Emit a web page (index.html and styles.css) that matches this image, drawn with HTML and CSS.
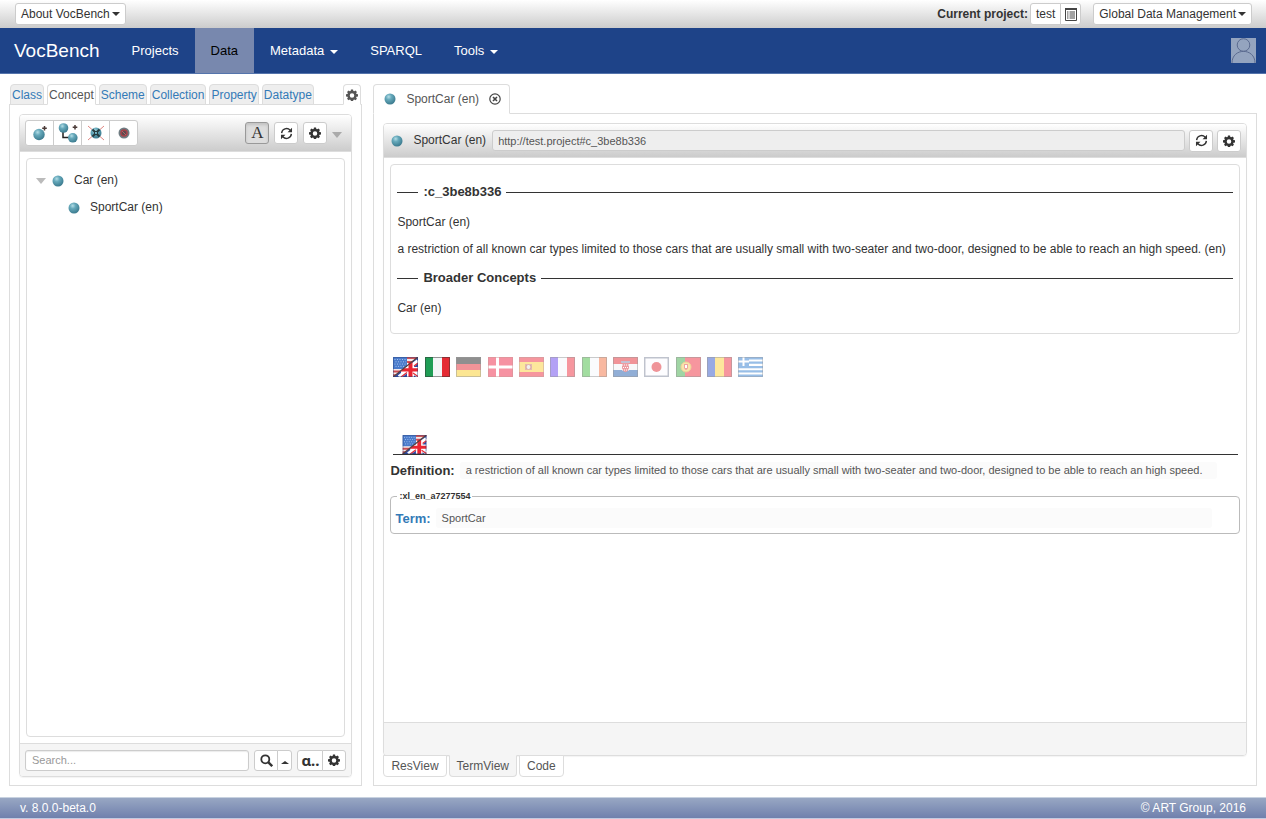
FILE: index.html
```html
<!DOCTYPE html>
<html lang="en">
<head>
<meta charset="utf-8">
<title>VocBench</title>
<link rel="stylesheet" href="styles.css">
</head>
<body>
<svg class="defs" aria-hidden="true">
  <defs>
    <radialGradient id="ball" cx="0.38" cy="0.3" r="0.75">
      <stop offset="0" stop-color="#b4dde6"/><stop offset="0.35" stop-color="#66a9bb"/><stop offset="1" stop-color="#37768a"/>
    </radialGradient>
    <symbol id="concept" viewBox="0 0 12 12"><circle cx="6" cy="6" r="5.5" fill="url(#ball)"/></symbol>
    <symbol id="gear" viewBox="0 0 16 16">
      <path fill="currentColor" fill-rule="evenodd" d="M6.600 0.500h2.800l.4 2 1.100.5 1.700-1.100 2 2-1.100 1.700.5 1.100 2 .4v2.800l-2 .4-.5 1.100 1.100 1.700-2 2-1.700-1.100-1.100.5-.4 2H6.600l-.4-2-1.100-.5-1.700 1.100-2-2 1.100-1.700-.5-1.100-2-.4V7.100l2-.4.5-1.100-1.100-1.700 2-2 1.700 1.100 1.100-.5zM8 5.500a3 3 0 1 0 0 6 3 3 0 0 0 0-6z"/>
    </symbol>
    <symbol id="refresh" viewBox="0 0 16 16">
      <path fill="none" stroke="currentColor" stroke-width="1.700" d="M2 7.500A6 6 0 0 1 12.500 4M14 8.500A6 6 0 0 1 3.500 12"/>
      <path fill="currentColor" d="M14.800 1v5.500H9.300zM1.200 15V9.500h5.500z"/>
    </symbol>
    <symbol id="flag-en" viewBox="0 0 25 20">
      <path fill="#f5e9ea" d="M0 0h25v20H0z"/>
      <path fill="#d0555a" d="M13 0h12v2H13zM13 4h12v2H13z"/>
      <path fill="#2f4aa8" d="M25 0v20H0z"/>
      <path stroke="#fff" stroke-width="4" d="M25 4l-8 6M17 12l8 7M15 13L6 20"/>
      <path fill="#fff" d="M14 6h7v14h-7zM8 10h17v6H8z"/>
      <path stroke="#e0303c" stroke-width="1.400" d="M20 16l5 3.500M14 15.500L8 20M21 9l4-3"/>
      <path fill="#ea2431" d="M15.500 5h4v15h-4zM8 11.300h17v3.200H8z"/>
      <path fill="#4a7bcb" d="M0 0h14v8.800L10 12H0z"/>
      <path stroke="#a3c0ec" stroke-dasharray="1 1.500" d="M1.500 2.500h11.500M2.500 4.800h10.500M1.500 7.100h11.500M2.500 9.400h9"/>
      <path fill="#f5e9ea" d="M0 12h10L0 20z"/>
      <path fill="#cf4f54" d="M0 13.500h8L5.500 15.500H0zM0 17.200h3.500L0 20z"/>
      <path stroke="#57403f" stroke-width="1.300" d="M0 20L25 0"/>
      <path fill="none" stroke="#263b73" d="M.5.5h24v19H.5z" opacity=".4"/>
    </symbol>
  </defs>
</svg>

<header class="topbar">
  <button class="btn" type="button">About VocBench <span class="caret"></span></button>
  <div class="topbar-right">
    <span class="project-label">Current project:</span>
    <span class="btn-group project">
      <button class="btn" type="button">test</button>
      <button class="btn icon-only" type="button" aria-label="Project list">
        <svg width="12" height="13" viewBox="0 0 12 13"><path fill="none" stroke="#444" d="M.5.5h11v12H.5z"/><path fill="#444" d="M0 0h12v2H0zM2 3.500h1.500v1H2zM2 5.500h1.500v1H2zM2 7.500h1.500v1H2zM2 9.500h1.500v1H2zM4.500 3.500H10v1H4.500zM4.500 5.500H10v1H4.500zM4.500 7.500H10v1H4.500zM4.500 9.500H10v1H4.500z"/></svg>
      </button>
    </span>
    <button class="btn" type="button">Global Data Management <span class="caret"></span></button>
  </div>
</header>

<nav class="navbar">
  <a class="brand" href="#">VocBench</a>
  <a class="nav-link" href="#">Projects</a>
  <a class="nav-link current" href="#">Data</a>
  <a class="nav-link" href="#">Metadata <span class="caret"></span></a>
  <a class="nav-link" href="#">SPARQL</a>
  <a class="nav-link" href="#">Tools <span class="caret"></span></a>
  <button class="avatar" type="button" aria-label="User">
    <svg width="25" height="25" viewBox="0 0 25 25"><path fill="#94a4bf" d="M0 0h25v25H0z"/><g fill="none" stroke="#5b6b90"><circle cx="12.500" cy="7" r="6.300"/><path d="M1 25C1 9.500 24 9.500 24 25"/></g></svg>
  </button>
</nav>

<main class="workspace">
  <section class="side">
    <div class="side-tabs">
      <a class="side-tab" href="#">Class</a>
      <a class="side-tab current" href="#">Concept</a>
      <a class="side-tab" href="#">Scheme</a>
      <a class="side-tab" href="#">Collection</a>
      <a class="side-tab" href="#">Property</a>
      <a class="side-tab" href="#">Datatype</a>
      <button class="side-tab current settings" type="button" aria-label="Tab settings"><svg width="12" height="12"><use href="#gear"/></svg></button>
    </div>
    <div class="frame">
      <div class="panel">
        <div class="panel-heading tools">
          <span class="btn-group actions">
            <button class="btn" type="button" aria-label="Create concept"><svg width="20" height="20" viewBox="0 0 20 20"><circle cx="9" cy="11.500" r="5.700" fill="url(#ball)"/><path stroke="#4b3b38" stroke-width="1.500" d="M14.500 3v4.500M12.200 5.200h4.600"/></svg></button>
            <button class="btn" type="button" aria-label="Create narrower concept"><svg width="20" height="20" viewBox="0 0 20 20"><path fill="none" stroke="#222" stroke-width="1.500" d="M5 8v6.500h7"/><circle cx="5.500" cy="5" r="4.800" fill="url(#ball)"/><circle cx="14.800" cy="14.800" r="4.800" fill="url(#ball)"/><path stroke="#4b3b38" stroke-width="1.500" d="M17 2v4.500M14.700 4.200h4.600"/></svg></button>
            <button class="btn" type="button" aria-label="Delete concept"><svg width="20" height="20" viewBox="0 0 20 20"><path stroke="#df8580" d="M2 3l16 14M18 3L2 17"/><circle cx="10" cy="10" r="5.500" fill="url(#ball)"/><path stroke="#263c40" stroke-width="2" d="M6.500 6.500l2.300 2.300M13.500 6.500l-2.300 2.300M6.500 13.500l2.300-2.300M13.500 13.500l-2.300-2.300"/><path fill="none" stroke="#263c40" d="M8.500 8.500h3v3h-3z"/></svg></button>
            <button class="btn" type="button" aria-label="Deprecate concept"><svg width="20" height="20" viewBox="0 0 20 20"><circle cx="10" cy="10" r="5.500" fill="#6f7c82"/><circle cx="10" cy="10" r="3" fill="#5a4c50" stroke="#a44148" stroke-width="1.500"/><path stroke="#b66065" d="M8 8l4 4"/></svg></button>
          </span>
          <button class="btn square letter" type="button">A</button>
          <button class="btn square" type="button" aria-label="Refresh"><svg width="13" height="13"><use href="#refresh"/></svg></button>
          <button class="btn square" type="button" aria-label="Settings"><svg width="12" height="12"><use href="#gear"/></svg></button>
          <span class="expander"></span>
        </div>
        <div class="panel-body">
          <ul class="tree">
            <li><span class="expander open"></span><svg width="12" height="12"><use href="#concept"/></svg><span>Car (en)</span></li>
            <li class="child"><svg width="12" height="12"><use href="#concept"/></svg><span>SportCar (en)</span></li>
          </ul>
        </div>
        <div class="panel-footer search">
          <input class="search-box" type="text" placeholder="Search..." aria-label="Search">
          <span class="btn-group">
            <button class="btn lens" type="button" aria-label="Search"><svg width="13" height="13" viewBox="0 0 13 13"><circle cx="5.300" cy="5.300" r="4" fill="none" stroke="#333" stroke-width="1.800"/><path stroke="#333" stroke-width="2.400" d="M8.200 8.200l4 4"/></svg></button>
            <button class="btn up" type="button" aria-label="More"><span class="caret-up"></span></button>
          </span>
          <span class="btn-group modes">
            <button class="btn mode" type="button">ɑ..</button>
            <button class="btn" type="button" aria-label="Search settings"><svg width="12" height="12"><use href="#gear"/></svg></button>
          </span>
        </div>
      </div>
    </div>
  </section>

  <section class="main">
    <div class="resource-tab">
      <svg width="12" height="12"><use href="#concept"/></svg>
      <span>SportCar (en)</span>
      <button class="close" type="button" aria-label="Close tab"><svg width="12" height="12" viewBox="0 0 12 12"><circle cx="6" cy="6" r="5.200" fill="none" stroke="#444" stroke-width="1.200"/><path stroke="#444" stroke-width="1.600" d="M4 4l4 4M8 4L4 8"/></svg></button>
    </div>
    <div class="frame">
      <div class="panel resource">
        <div class="panel-heading">
          <svg width="12" height="12"><use href="#concept"/></svg>
          <label for="uri">SportCar (en)</label>
          <input class="uri" id="uri" type="text" readonly value="http://test.project#c_3be8b336">
          <button class="btn square" type="button" aria-label="Refresh"><svg width="13" height="13"><use href="#refresh"/></svg></button>
          <button class="btn square" type="button" aria-label="Settings"><svg width="12" height="12"><use href="#gear"/></svg></button>
        </div>
        <div class="panel-body">
          <article class="summary">
            <h2>:c_3be8b336</h2>
            <p>SportCar (en)</p>
            <p>a restriction of all known car types limited to those cars that are usually small with two-seater and two-door, designed to be able to reach an high speed. (en)</p>
            <h2>Broader Concepts</h2>
            <p>Car (en)</p>
          </article>
          <div class="flags">
            <svg viewBox="0 0 25 20"><use href="#flag-en"/></svg>
            <svg viewBox="0 0 25 20"><path fill="#f3f5f7" d="M0 0h25v20H0z"/><path fill="#1f9d55" d="M0 0h8v20H0z"/><path fill="#e52b34" d="M17 0h8v20h-8z"/><path fill="none" stroke="#333" stroke-opacity=".5" d="M.5.5h24v19H.5z"/></svg>
            <svg class="off" viewBox="0 0 25 20"><path fill="#222" d="M0 0h25v7H0z"/><path fill="#e52b34" d="M0 7h25v6H0z"/><path fill="#fbce28" d="M0 13h25v7H0z"/><path fill="none" stroke="#333" stroke-opacity=".5" d="M.5.5h24v19H.5z"/></svg>
            <svg class="off" viewBox="0 0 25 20"><path fill="#ee2747" d="M0 0h25v20H0z"/><path fill="#fff" d="M8 0h3v20H8zM0 8.500h25v3H0z"/><path fill="none" stroke="#933" stroke-opacity=".5" d="M.5.5h24v19H.5z"/></svg>
            <svg class="off" viewBox="0 0 25 20"><path fill="#ee2f3f" d="M0 0h25v20H0z"/><path fill="#fdd03b" d="M0 5h25v10H0z"/><path fill="#c77864" d="M6 7h2v6H6zM11 7h2v6h-2z"/><circle cx="9.500" cy="10" r="2.500" fill="#e4e2df" stroke="#ba5248"/><path fill="none" stroke="#844" stroke-opacity=".5" d="M.5.5h24v19H.5z"/></svg>
            <svg class="off" viewBox="0 0 25 20"><path fill="#f7f9fc" d="M0 0h25v20H0z"/><path fill="#6945ed" d="M0 0h8v20H0z"/><path fill="#ee2f3f" d="M17 0h8v20h-8z"/><path fill="none" stroke="#333" stroke-opacity=".5" d="M.5.5h24v19H.5z"/></svg>
            <svg class="off" viewBox="0 0 25 20"><path fill="#f7f9fc" d="M0 0h25v20H0z"/><path fill="#47bd43" d="M0 0h8v20H0z"/><path fill="#f27343" d="M17 0h8v20h-8z"/><path fill="none" stroke="#333" stroke-opacity=".5" d="M.5.5h24v19H.5z"/></svg>
            <svg class="off" viewBox="0 0 25 20"><path fill="#f3f5f7" d="M0 0h25v20H0z"/><path fill="#e52b34" d="M0 0h25v7H0z"/><path fill="#265fae" d="M0 13h25v7H0z"/><path fill="#dc3e48" d="M9 5h7v6q-1 4-3.500 4T9 11z"/><path stroke="#fff" stroke-dasharray="1 1" d="M9 8h7M10 10.500h6M9 13h7"/><path stroke="#6da5cf" stroke-width="1.500" d="M8 5h9"/><path fill="none" stroke="#333" stroke-opacity=".5" d="M.5.5h24v19H.5z"/></svg>
            <svg class="off" viewBox="0 0 25 20"><path fill="#fcfdff" d="M0 0h25v20H0z"/><circle cx="12.500" cy="10" r="5" fill="#e02c35"/><path fill="none" stroke="#3d4a68" stroke-opacity=".65" stroke-width="1.500" d="M.7.7h23.600v18.600H.7z"/></svg>
            <svg class="off" viewBox="0 0 25 20"><path fill="#ee2f3f" d="M0 0h25v20H0z"/><path fill="#43ac4b" d="M0 0h9v20H0z"/><circle cx="10" cy="10" r="5" fill="#f1cf59" stroke="#dfa331"/><path fill="#e14c42" d="M8 7h4v4q-2 4-4 0z"/><path fill="#fff" d="M9 8h2v3H9z"/><path fill="none" stroke="#333" stroke-opacity=".5" d="M.5.5h24v19H.5z"/></svg>
            <svg class="off" viewBox="0 0 25 20"><path fill="#fdd03b" d="M0 0h25v20H0z"/><path fill="#3357c9" d="M0 0h8v20H0z"/><path fill="#ee2f3f" d="M17 0h8v20h-8z"/><path fill="none" stroke="#333" stroke-opacity=".5" d="M.5.5h24v19H.5z"/></svg>
            <svg class="off" viewBox="0 0 25 20"><path fill="#fff" d="M0 0h25v20H0z"/><path fill="#347fd0" d="M0 0h25v2.500H0zM0 4.500h25v2.300H0zM0 9h25v2.300H0zM0 13.300h25v2.300H0zM0 17.500h25V20H0zM0 0h11v9H0z"/><path stroke="#fff" stroke-width="2" d="M5.500 0v9M0 4.500h11"/><path fill="none" stroke="#333" stroke-opacity=".4" d="M.5.5h24v19H.5z"/></svg>
          </div>
          <div class="language"><svg width="25" height="19" preserveAspectRatio="none"><use href="#flag-en"/></svg></div>
          <div class="definition">
            <span class="term-label">Definition:</span>
            <span class="value">a restriction of all known car types limited to those cars that are usually small with two-seater and two-door, designed to be able to reach an high speed.</span>
          </div>
          <fieldset class="lexicalization">
            <legend>:xl_en_a7277554</legend>
            <span class="term-label link">Term:</span>
            <span class="value">SportCar</span>
          </fieldset>
        </div>
        <div class="panel-footer blank"></div>
      </div>
      <div class="view-tabs">
        <button class="view-tab" type="button">ResView</button>
        <button class="view-tab current" type="button">TermView</button>
        <button class="view-tab" type="button">Code</button>
      </div>
    </div>
  </section>
</main>

<footer class="footer"><span>v. 8.0.0-beta.0</span><span>© ART Group, 2016</span></footer>
</body>
</html>
```

FILE: styles.css
```css
* { box-sizing: border-box; }

body {
  margin: 0;
  height: 100vh;
  display: flex;
  flex-direction: column;
  font: 12px/17px "Liberation Sans", Arial, sans-serif;
  color: #333;
  background: #fff;
}

button, input { font: inherit; color: inherit; margin: 0; }
a { text-decoration: none; }
svg { display: block; flex: none; }
.defs { position: absolute; width: 0; height: 0; }

/* Buttons */
.btn {
  display: inline-flex;
  align-items: center;
  justify-content: center;
  height: 22px;
  padding: 0 5px;
  border: 1px solid #ccc;
  border-radius: 3px;
  background: #fff;
  white-space: nowrap;
}
.btn-group { display: flex; }
.btn-group .btn + .btn { margin-left: -1px; }
.btn-group .btn:not(:last-child) { border-top-right-radius: 0; border-bottom-right-radius: 0; }
.btn-group .btn:not(:first-child) { border-top-left-radius: 0; border-bottom-left-radius: 0; }
.square { width: 24px; padding: 0; }
.caret {
  margin-left: 2px;
  border: 4px solid transparent;
  border-top-color: currentColor;
  border-bottom: 0;
}
.caret-up { border: 4px solid transparent; border-bottom: 3px solid #333; border-top: 0; }

/* Top bar */
.topbar {
  flex: none;
  height: 28px;
  display: flex;
  align-items: center;
  justify-content: space-between;
  padding: 0 14px 0 15px;
  background: linear-gradient(#fff, #ccc);
}
.topbar-right { display: flex; align-items: center; }
.project-label { font-weight: bold; margin-right: 2px; }
.project { margin-right: 12px; }
.icon-only { width: 21px; padding: 0; }

/* Navigation */
.navbar {
  flex: none;
  height: 46px;
  display: flex;
  align-items: stretch;
  padding-right: 10px;
  background: #1e4388;
  border-bottom: 1px solid #5474ac;
}
.navbar a { display: flex; align-items: center; color: #fff; }
.brand { padding: 0 16px 0 14px; font-size: 19px; }
.nav-link { padding: 0 16px; font-size: 13px; }
.nav-link .caret { margin-left: 6px; margin-top: 2px; }
.navbar .nav-link.current { background: #7888ae; color: #000; }
.avatar { margin: auto 0 auto auto; padding: 0; border: 0; background: none; }

/* Workspace */
.workspace {
  flex: 1;
  min-height: 0;
  display: flex;
  gap: 11px;
  padding: 10px 9px 11px 9px;
}
.side, .main { display: flex; flex-direction: column; min-width: 0; }
.side { flex: 2 1 0; }
.main { flex: 5 1 0; }
.frame {
  flex: 1;
  min-height: 0;
  display: flex;
  flex-direction: column;
  padding: 9px 9px 8px;
  border: 1px solid #ddd;
}

.side-tabs { display: flex; gap: 3px; margin-bottom: -1px; z-index: 1; padding: 0 1px; }
.side-tab {
  height: 21px;
  padding: 2px 1px;
  border: 1px solid #ddd;
  border-radius: 4px 4px 0 0;
  background: #eee;
  color: #337ab7;
}
.side-tab.current { background: #fff; border-bottom-color: #fff; color: #555; }
.settings { width: 18px; margin-left: auto; display: grid; place-items: center; }

/* Panels */
.panel {
  flex: 1;
  min-height: 0;
  display: flex;
  flex-direction: column;
  border: 1px solid #ddd;
  border-radius: 4px;
  box-shadow: 0 1px 1px rgba(0, 0, 0, .05);
}
.panel-heading {
  display: flex;
  align-items: center;
  height: 34px;
  padding: 0 5px 0 7px;
  gap: 4px;
  background: linear-gradient(#fff, #ccc);
  border-bottom: 1px solid #ddd;
  border-radius: 3px 3px 0 0;
}
.panel-body { flex: 1; min-height: 0; padding: 6px; display: flex; flex-direction: column; }
.panel-footer { background: #f5f5f5; border-top: 1px solid #ddd; height: 33px; border-radius: 0 0 3px 3px; }

.tools { height: 37px; padding: 0 9px 0 5px; gap: 5px; }
.actions { margin-right: auto; }
.actions .btn { width: 29px; height: 26px; padding: 0; }
.letter {
  font: 17px/18px "Liberation Serif", "Times New Roman", serif;
  background: #ddd;
  border-color: #999;
  box-shadow: inset 0 2px 3px rgba(0, 0, 0, .12);
}
.expander { border: 5px solid transparent; border-top: 6px solid #aaa; border-bottom: 0; }
.tools .expander { margin-top: 3px; }

.tree {
  flex: 1;
  margin: 0;
  padding: 8px 9px;
  list-style: none;
  border: 1px solid #ddd;
  border-radius: 4px;
}
.tree li { display: flex; align-items: center; height: 27px; }
.tree svg { margin: 0 10px 0 6px; }
.tree .child { padding-left: 26px; }
.open { border-top-color: #bbb; }

.search { display: flex; align-items: center; gap: 5px; padding: 0 5px; }
.search .btn { height: 21px; }
.search-box {
  flex: 1;
  min-width: 0;
  height: 21px;
  padding: 0 6px;
  font-size: 11px;
  border: 1px solid #ccc;
  border-radius: 3px;
  box-shadow: inset 0 1px 1px rgba(0, 0, 0, .08);
}
.search-box::placeholder { color: #999; }
.lens { width: 24px; }
.search .up { width: 15px; padding: 4px 0 0; }
.search .mode { width: 26px; padding: 0; font: bold 15px/15px "Noto Sans", sans-serif; }

/* Resource */
.resource-tab {
  align-self: flex-start;
  display: flex;
  align-items: center;
  height: 30px;
  margin-bottom: -1px;
  padding: 0 8px 0 10px;
  gap: 10px;
  z-index: 1;
  background: #fff;
  border: 1px solid #ddd;
  border-bottom-color: #fff;
  border-radius: 4px 4px 0 0;
  color: #555;
}
.close { padding: 0; border: 0; background: none; }
.resource label { margin: 0 2px 0 6px; }
.uri {
  flex: 1;
  min-width: 0;
  height: 21px;
  padding: 0 5px;
  font-size: 11px;
  color: #555;
  background: #eee;
  border: 1px solid #ccc;
  border-radius: 3px;
}
.summary {
  padding: 17px 6px 6px;
  border: 1px solid #ddd;
  border-radius: 4px;
}
.summary h2 {
  display: flex;
  align-items: center;
  gap: 5px;
  margin: 0 0 12px;
  font-size: 13px;
  line-height: 20px;
}
.summary h2::before, .summary h2::after { content: ""; height: 1px; width: 21px; background: #333; }
.summary h2::after { flex: 1; }
.summary p { margin: 0 0 10px; }

.flags {
  display: flex;
  justify-content: space-between;
  max-width: 373px;
  margin-top: 23px;
  padding-left: 3px;
}
.flags svg { width: 25px; height: 20px; }
.off { opacity: .5; }
.language { margin: 58px 2px 0 3px; padding-left: 9px; border-bottom: 1px solid #333; }

.definition { display: flex; align-items: center; gap: 5px; margin: 7px 23px 0 0; }
.term-label { font-size: 13px; font-weight: bold; }
.link { color: #337ab7; }
.value {
  flex: 1;
  padding: 0 6px;
  font-size: 11px;
  color: #555;
  background: #fbfbfb;
  border-radius: 3px;
}
.lexicalization {
  display: flex;
  align-items: center;
  gap: 5px;
  margin: 12px 0 0;
  padding: 7px 27px 5px 4px;
  border: 1px solid #bbb;
  border-radius: 4px;
}
.lexicalization legend { margin-left: 2px; padding: 0 2px; font-size: 9px; line-height: 10px; font-weight: bold; }
.lexicalization .value { line-height: 20px; }

.view-tabs { display: flex; gap: 2px; margin-top: -1px; z-index: 1; }
.view-tab {
  height: 22px;
  padding: 0 7px;
  border: 1px solid #ddd;
  border-radius: 0 0 4px 4px;
  background: #fff;
  color: #555;
}
.view-tab.current { background: #f5f5f5; border-top-color: #f5f5f5; }

.footer {
  flex: none;
  height: 22px;
  display: flex;
  align-items: center;
  justify-content: space-between;
  padding: 0 20px;
  color: #fff;
  background: linear-gradient(#98a7c3, #7080ad);
  border-top: 1px solid #c8d2e0;
  border-bottom: 1px solid #c3cae0;
}
```
